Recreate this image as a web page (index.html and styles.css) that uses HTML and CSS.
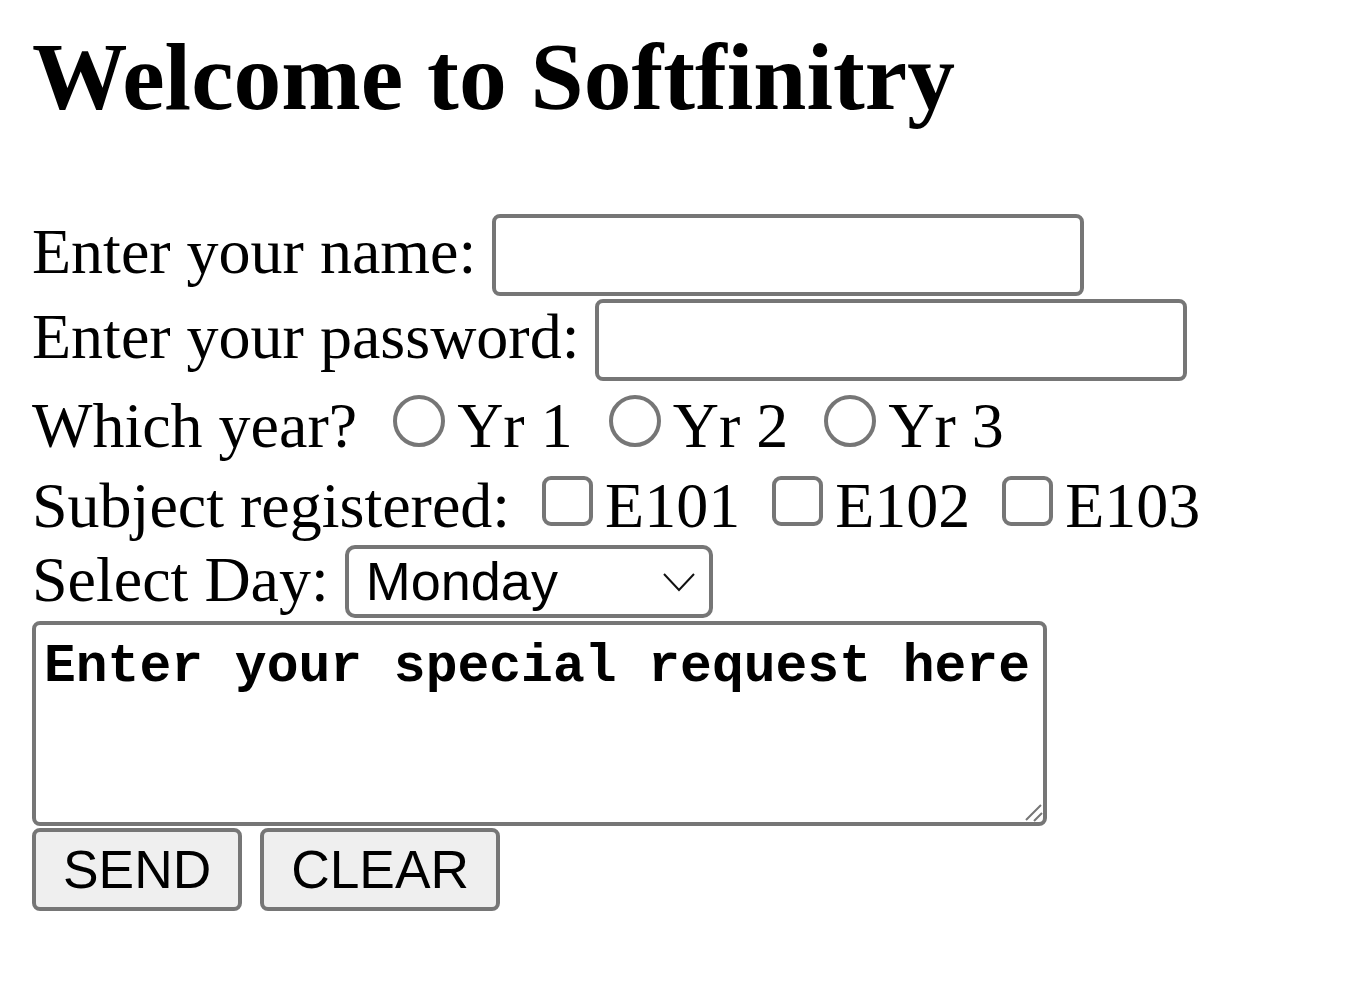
FILE: index.html
```html
<!DOCTYPE html>
<html lang="en">
<head>
<meta charset="utf-8">
<title>Softfinitry</title>
<link rel="stylesheet" href="styles.css">
</head>
<body>
<div class="page">
  <h1 class="title">Welcome to Softfinitry</h1>
  <form class="form">
    <div class="row row-name">
      <span class="txt txt-up">Enter your name:</span>
      <input class="field" type="text">
    </div>
    <div class="row row-pass">
      <span class="txt txt-up">Enter your password:</span>
      <input class="field" type="password">
    </div>
    <div class="row row-year">
      <span class="txt txt-down">Which year?</span>
      <input class="radio" type="radio" name="yr"><span class="txt txt-down">Yr 1</span>
      <input class="radio" type="radio" name="yr"><span class="txt txt-down">Yr 2</span>
      <input class="radio" type="radio" name="yr"><span class="txt txt-down">Yr 3</span>
    </div>
    <div class="row row-subj">
      <span class="txt txt-down">Subject registered:</span>
      <input class="check" type="checkbox"><span class="txt txt-down">E101</span>
      <input class="check" type="checkbox"><span class="txt txt-down">E102</span>
      <input class="check" type="checkbox"><span class="txt txt-down">E103</span>
    </div>
    <div class="row row-day">
      <span class="txt txt-up-s">Select Day:</span>
      <div class="select">
        <span class="select-text">Monday</span>
        <svg class="chev" width="32" height="19" viewBox="0 0 32 19"><path d="M1 1 L16 17 L31 1" fill="none" stroke="#111" stroke-width="2"/></svg>
      </div>
    </div>
    <div class="area-wrap">
      <textarea class="area" wrap="off">Enter your special request here</textarea>
      <svg class="grip" width="18" height="18" viewBox="0 0 18 18"><path d="M1 16 L16 1 M9 17 L17 9" stroke="#767676" stroke-width="2"/></svg>
    </div>
    <div class="buttons">
      <button class="btn" type="submit">SEND</button>
      <button class="btn" type="reset">CLEAR</button>
    </div>
  </form>
</div>
</body>
</html>
```
FILE: styles.css
```css
html, body {
  margin: 0;
  padding: 0;
  background: #fff;
}
.page {
  padding: 22px 32px 0 32px;
  font-family: "Liberation Serif", "Times New Roman", serif;
  color: #000;
}
.title {
  margin: 0;
  font-size: 95.5px;
  font-weight: bold;
  line-height: 110px;
}
.form {
  margin: 82px 0 0 0;
}
.row {
  display: flex;
  align-items: center;
}
.row-name { height: 82px; margin-bottom: 3px; }
.row-pass { height: 82px; }
.row-year { height: 80px; }
.row-subj { height: 80px; }
.row-day { height: 73px; margin-top: 4px; }
.txt {
  font-size: 64px;
  line-height: 64px;
  white-space: pre;
}
.txt-up { padding-bottom: 7px; }
.txt-up-s { padding-bottom: 3px; }
.txt-down { padding-top: 9px; }
.field {
  box-sizing: border-box;
  width: 592px;
  height: 82px;
  margin: 0 0 0 16px;
  border: 4px solid #767676;
  border-radius: 8px;
  background: #fff;
  padding: 4px 8px;
  font-family: "Liberation Sans", Arial, sans-serif;
  font-size: 53px;
}
.radio {
  appearance: none;
  -webkit-appearance: none;
  box-sizing: border-box;
  width: 52px;
  height: 52px;
  margin: 0 12px 0 36px;
  border: 4px solid #767676;
  border-radius: 50%;
  background: #fff;
  flex: none;
}
.check {
  appearance: none;
  -webkit-appearance: none;
  box-sizing: border-box;
  width: 51px;
  height: 50px;
  margin: 0 12px 0 32px;
  border: 4px solid #767676;
  border-radius: 9px;
  background: #fff;
  flex: none;
}
.select {
  box-sizing: border-box;
  width: 368px;
  height: 73px;
  margin-left: 16px;
  border: 4px solid #767676;
  border-radius: 10px;
  background: #fff;
  display: flex;
  align-items: center;
  justify-content: space-between;
  padding: 0 14px 0 17px;
  font-family: "Liberation Sans", Arial, sans-serif;
  font-size: 54px;
  line-height: 60px;
}
.select-text {
  padding-bottom: 2px;
}
.chev {
  display: block;
  margin-top: 2px;
}
.area-wrap {
  position: relative;
  width: 1015px;
  height: 205px;
  margin-top: 3px;
}
.area {
  box-sizing: border-box;
  display: block;
  width: 1015px;
  height: 205px;
  margin: 0;
  border: 4px solid #767676;
  border-radius: 8px;
  padding: 12px 8px 8px 8px;
  resize: none;
  white-space: pre;
  font-family: "Liberation Mono", "Courier New", monospace;
  font-size: 53px;
  font-weight: bold;
  line-height: 60px;
  color: #000;
  background: #fff;
  overflow: hidden;
}
.grip {
  position: absolute;
  right: 4px;
  bottom: 4px;
}
.buttons {
  display: flex;
  margin-top: 2px;
}
.btn {
  box-sizing: border-box;
  height: 83px;
  margin: 0 18px 0 0;
  padding: 0 27px;
  border: 4px solid #767676;
  border-radius: 8px;
  background: #efefef;
  color: #000;
  font-family: "Liberation Sans", Arial, sans-serif;
  font-size: 53.33px;
  line-height: 60px;
}
```
